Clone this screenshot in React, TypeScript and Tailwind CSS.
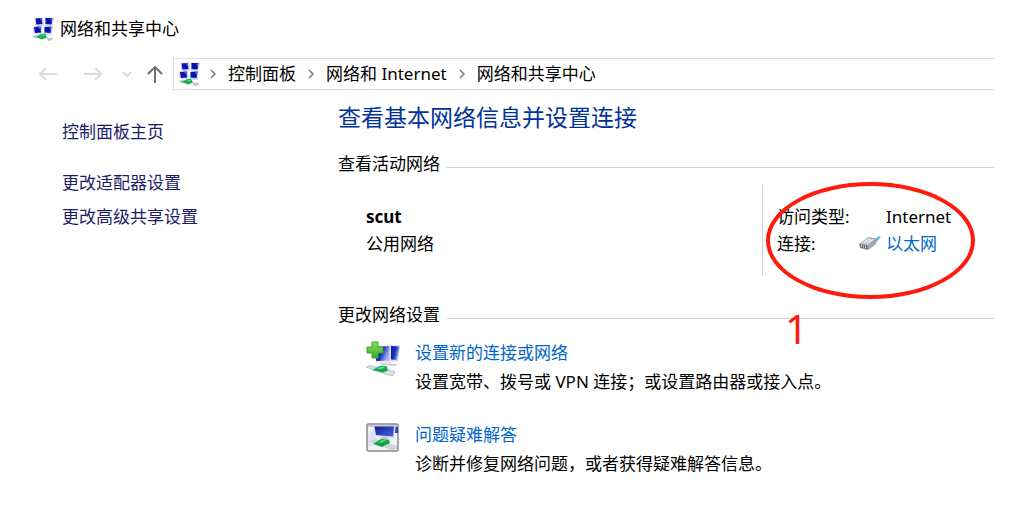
import type { ReactNode } from "react";

const NetworkIcon = ({ className }: { className?: string }) => (
    <svg viewBox="0 0 22 24" className={className} aria-hidden="true">
        <path d="M3 1l8-.5 1 7.500-5 1.500L3 8zM12.500.5L22 1l-1.500 7.500L13 9zM1 9.500l9-.5.5 8-5 .5-4.500-2zM12 9.500l9-.5-1.500 9-7-.5z" fill="#cdd4ea" />
        <path d="M3.500 1.500l6-.5 1 6-6 .5z" fill="#0a12b4" />
        <path d="M13.500 1h7l-1 6.500-6-.5z" fill="#0a12b4" />
        <path d="M2 10l6.500-.5.5 6-6 .5z" fill="#0a12b4" />
        <path d="M12.500 10l7-.5-1 6.500-6-.5z" fill="#0a12b4" />
        <path d="M7.500 1.500l2 0 .5 3zM18 1.500h2l-.5 3.500zM6 10l2 0 .5 3zM17 10h2l-.5 3z" fill="#5468e0" />
        <path d="M0 19l5-1 4 2-5 1.500zM14 20.500l6 .5 1 2-5 1z" fill="#bcc5c8" />
        <path d="M4 20l4-2.500 5-1 2 4-5 2z" fill="#16ad4d" />
        <path d="M7 19.500l5-2 1 1.500z" fill="#5de08a" />
    </svg>
);

const NewConnectionIcon = () => (
    <svg viewBox="0 0 36 36" className="w-9 h-9" aria-hidden="true">
        <defs>
            <linearGradient id="screen" x1="0" y1="0" x2="1" y2="0.4">
                <stop offset="0" stopColor="#0a1aa8" />
                <stop offset="0.55" stopColor="#1a2fb8" />
                <stop offset="1" stopColor="#a9b8f2" />
            </linearGradient>
            <linearGradient id="plus" x1="0" y1="0" x2="0" y2="1">
                <stop offset="0" stopColor="#8fdc6e" />
                <stop offset="1" stopColor="#35ac22" />
            </linearGradient>
        </defs>
        <path d="M24 4l10.500.5L32 21l-7-.5z" fill="#d9deea" />
        <path d="M25 5l8.500.5L31 19l-6-.5z" fill="url(#screen)" />
        <path d="M8 5l17-1v18l-15-.5z" fill="#dfe3ee" />
        <path d="M9 6l14.500-1v14.500L10 20z" fill="url(#screen)" />
        <path d="M13 22l10 .5 9 .5-3 2-13-1z" fill="#cbd0d4" />
        <path d="M0 26l4-1.500 25 6-2 4-5-.5z" fill="#dce2e5" stroke="#b3bcc0" strokeWidth="0.8" />
        <path d="M6 29l9-4.500 6 1 1 4-5 2z" fill="#16a84d" />
        <path d="M10 28l6-2.500 3 .5-3 2z" fill="#61dc8d" />
        <path d="M6 1h6v5h5v6h-5v5H6v-5H1V6h5z" fill="url(#plus)" stroke="#3aa528" />
    </svg>
);

const TroubleshootIcon = () => (
    <svg viewBox="0 0 34 30" className="w-[34px] h-[30px]" aria-hidden="true">
        <defs>
            <linearGradient id="monitor" x1="0" y1="0" x2="1" y2="1">
                <stop offset="0" stopColor="#0c1b9c" />
                <stop offset="1" stopColor="#4d64d6" />
            </linearGradient>
        </defs>
        <rect x="1" y="1" width="31" height="27" rx="1.500" fill="#eef2f6" stroke="#868b90" strokeWidth="1.500" />
        <path d="M2 2h29v2H2z" fill="#c4c9ce" />
        <path d="M2 12l8-8v16l-8 4z" fill="#dbe5ee" />
        <path d="M8 3.500l21-.5-1 12-18-2z" fill="#d0d7ea" />
        <path d="M8.500 3.500h19.500l-1 10-17-1.500z" fill="url(#monitor)" />
        <path d="M29.500 4H32v6h-3z" fill="#2b40bb" />
        <path d="M15 14h6l3 3-10-1z" fill="#bfc7ce" />
        <path d="M3 18l7-2 21 7v3l-7 1z" fill="#cbd6da" />
        <path d="M7 21l8-5 8 1 1 3-8 4z" fill="#12a548" />
        <path d="M11 19.500l6-2.500 4 .5-5 2z" fill="#59dc88" />
    </svg>
);

const EthernetIcon = () => (
    <svg viewBox="0 0 22 16" className="w-[22px] h-4" aria-hidden="true">
        <path d="M15 4l5-3 2 .5-2 3-4 4z" fill="#6cc0e2" />
        <path d="M0 9l10-7 7 2v5l-8 6-8-2z" fill="#8b9499" />
        <path d="M1 8.500L10 3l6 1.500-7 5.500z" fill="#c9d0d4" />
        <path d="M9.500 10l7-5v3.500l-7 5.500z" fill="#a2acb1" />
        <path d="M1.500 9.500L8 11v3l-6.500-1.500z" fill="#666f62" />
        <path d="M2.500 10v2M4.500 10.500v2M6.500 11v2" stroke="#d5d478" />
        <path d="M5 7l6-3.500M8 8l6-3.500" stroke="#eef1f2" />
    </svg>
);

const Chevron = () => (
    <svg viewBox="0 0 6 10" className="w-[6px] h-[10px]" fill="none" stroke="#777" strokeWidth="1.500" aria-hidden="true">
        <path d="M1 1l4 4-4 4" />
    </svg>
);

const NavButton = ({ label, className, children }: { label: string; className: string; children: ReactNode }) => (
    <button type="button" aria-label={label} className={className}>
        <svg viewBox="0 0 18 18" className="w-[18px] h-[18px]" fill="none" stroke="currentColor" strokeWidth="2" aria-hidden="true">
            {children}
        </svg>
    </button>
);

const SectionTitle = ({ children }: { children: ReactNode }) => (
    <div className="flex items-center gap-[7px]">
        <h2 className="leading-6">{children}</h2>
        <div className="flex-1 border-t border-[#cfcfcf] mt-[7px]" />
    </div>
);

const tasks = [
    {
        title: "设置新的连接或网络",
        description: "设置宽带、拨号或 VPN 连接；或设置路由器或接入点。",
        icon: <NewConnectionIcon />,
    },
    {
        title: "问题疑难解答",
        description: "诊断并修复网络问题，或者获得疑难解答信息。",
        icon: <TroubleshootIcon />,
    },
];

export default function App() {
    return (
        <div lang="zh-CN" className="min-h-screen bg-white pt-[17px] pr-9 text-[17px] text-black font-['Noto_Sans','Noto_Sans_CJK_SC',sans-serif]">
            <header className="flex items-center gap-[6px] pl-8 leading-6">
                <NetworkIcon className="w-[22px] h-6" />
                <h1>网络和共享中心</h1>
            </header>

            <nav className="flex items-center mt-[17px] pl-[39px]">
                <NavButton label="后退" className="text-[#dcdcdc] mr-[27px]">
                    <path d="M18 9H1M7 3L1 9l6 6" />
                </NavButton>
                <NavButton label="前进" className="text-[#dcdcdc] mr-4">
                    <path d="M0 9h17M11 3l6 6-6 6" />
                </NavButton>
                <NavButton label="最近的位置" className="text-[#dcdcdc] mr-[10px]">
                    <path d="M5 7l4 4 4-4" />
                </NavButton>
                <NavButton label="上移" className="text-[#707070] mr-[9px]">
                    <path d="M9 18V2M2 9l7-7 7 7" />
                </NavButton>
                <div className="flex flex-1 items-center h-8 pl-1 border border-r-0 border-[#dcdcdc] leading-6 whitespace-nowrap">
                    <NetworkIcon className="w-[22px] h-6 mr-[10px]" />
                    <ol className="flex items-center gap-3">
                        <li className="flex items-center gap-3"><Chevron /><a href="#panel">控制面板</a></li>
                        <li className="flex items-center gap-3"><Chevron /><a href="#internet">网络和 Internet</a></li>
                        <li className="flex items-center gap-3"><Chevron /><a href="#center">网络和共享中心</a></li>
                    </ol>
                </div>
            </nav>

            <div className="flex">
                <aside className="w-[338px] shrink-0 pl-[62px] pt-[30px] leading-6 text-[#1c1c66]">
                    <a href="#home" className="block">控制面板主页</a>
                    <ul className="mt-[27px] space-y-[10px]">
                        <li><a href="#adapter">更改适配器设置</a></li>
                        <li><a href="#sharing">更改高级共享设置</a></li>
                    </ul>
                </aside>

                <main className="flex-1 pt-[11px]">
                    <p className="text-[23px] leading-8 text-[#003399] mb-[19px]">查看基本网络信息并设置连接</p>

                    <SectionTitle>查看活动网络</SectionTitle>
                    <div className="flex justify-between mt-[9px] pl-7 leading-[27px]">
                        <div className="pt-[18px]">
                            <p className="font-bold">scut</p>
                            <p>公用网络</p>
                        </div>
                        <div className="relative w-[232px] border-l border-[#cfcfcf] pl-[14px] pt-[18px] pb-[19px]">
                            <dl className="grid grid-cols-[109px_1fr]">
                                <dt>访问类型:</dt>
                                <dd>Internet</dd>
                                <dt>连接:</dt>
                                <dd className="relative">
                                    <span className="absolute right-full top-[5px] mr-[5px]"><EthernetIcon /></span>
                                    <a href="#ethernet" className="text-[#0066cc]">以太网</a>
                                </dd>
                            </dl>
                            {/* Step marker */}
                            <div className="absolute left-[3px] -top-[3px] w-[209px] h-[117px] rounded-[50%] border-4 border-[#ff1a0d] pointer-events-none" />
                            <span className="absolute left-[22px] top-[124px] text-[40px] leading-10 text-[#ff1a0d]">1</span>
                        </div>
                    </div>

                    <div className="mt-[27px]">
                        <SectionTitle>更改网络设置</SectionTitle>
                    </div>
                    <ul className="mt-[11px] pl-7 space-y-6 leading-[29px]">
                        {tasks.map((task) => (
                            <li key={task.title} className="flex">
                                <div className="w-[49px] shrink-0 pt-[3px]">{task.icon}</div>
                                <div>
                                    <a href="#task" className="block text-[#0066cc]">{task.title}</a>
                                    <p>{task.description}</p>
                                </div>
                            </li>
                        ))}
                    </ul>
                </main>
            </div>
        </div>
    );
}
